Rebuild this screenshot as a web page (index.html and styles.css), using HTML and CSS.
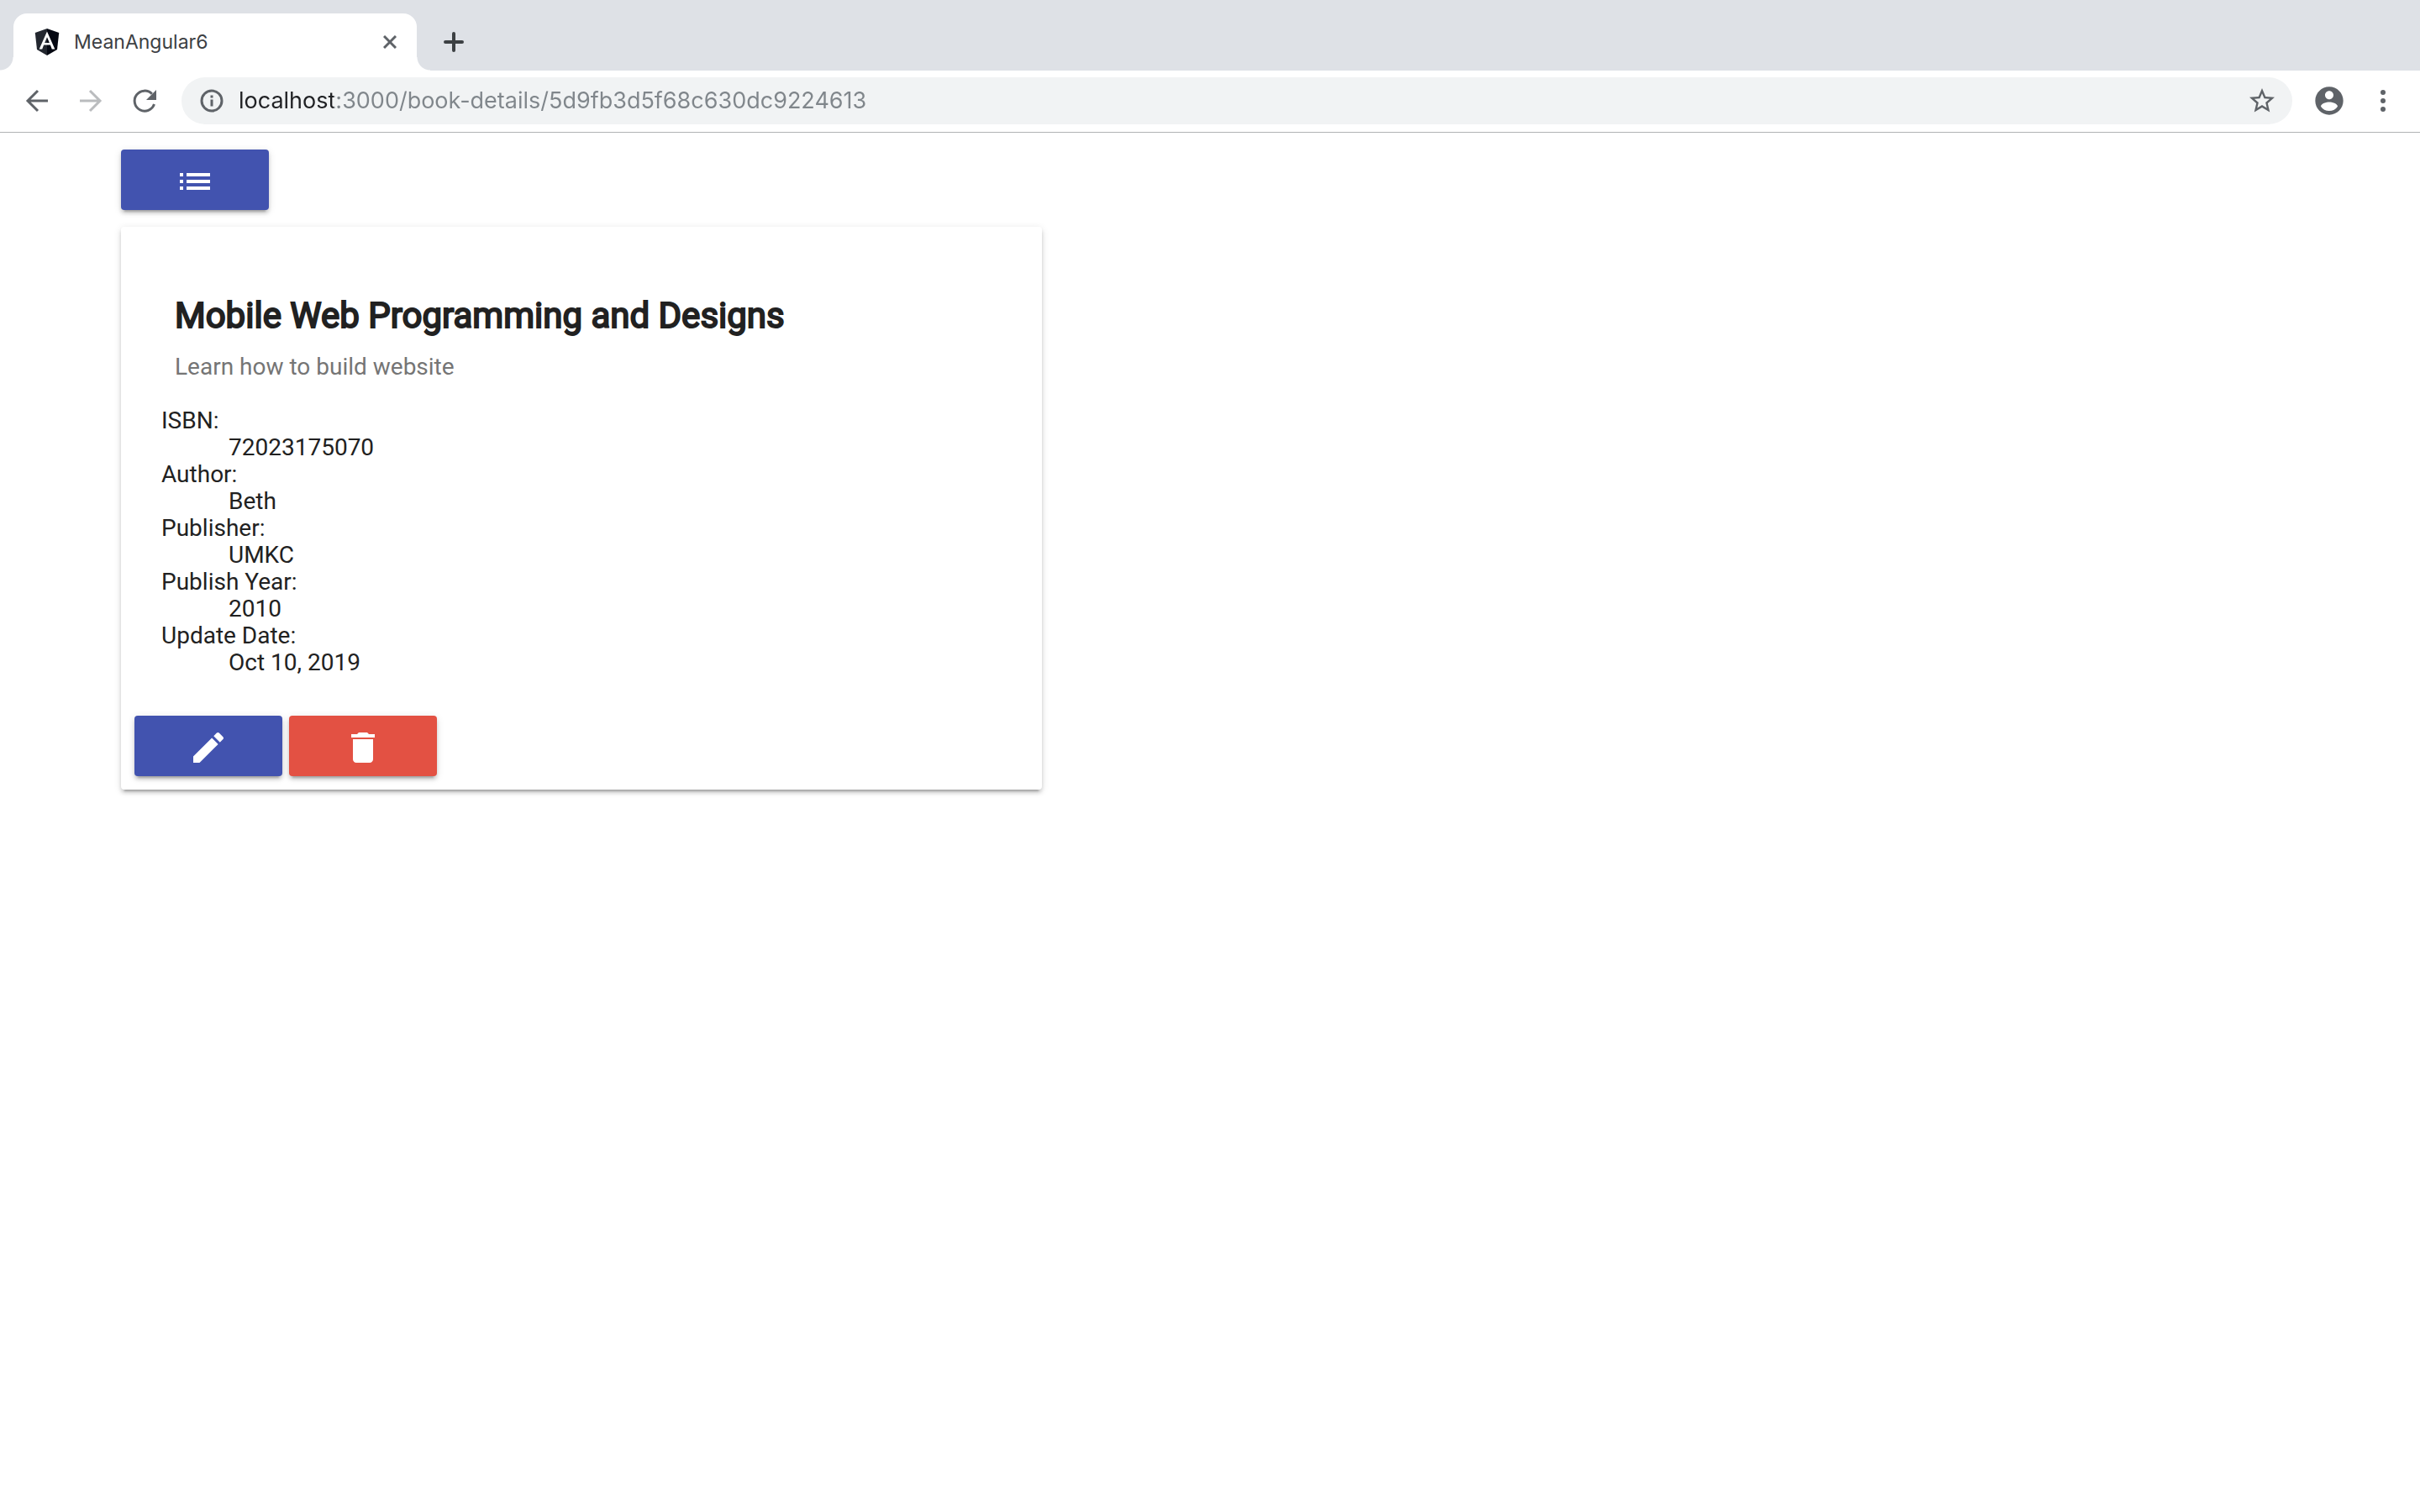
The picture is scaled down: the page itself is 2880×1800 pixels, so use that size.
FILE: index.html
```html
<!DOCTYPE html>
<html lang="en">
<head>
<meta charset="utf-8">
<meta name="viewport" content="width=device-width, initial-scale=1">
<title>MeanAngular6</title>
<link rel="stylesheet" href="styles.css">
</head>
<body>
<header class="browser">
  <div class="tab-strip">
    <div class="tab">
      <svg class="favicon" viewBox="0 0 32 36" aria-hidden="true">
        <path fill="#23272f" d="M16 0 0 5.500 2.500 28 16 36z"/>
        <path fill="#050812" d="M16 0 32 5.500 29.500 28 16 36z"/>
        <path fill="#fff" fill-rule="evenodd" d="M16 4 5.500 27.500h4L11.600 22h8.800l2.100 5.500h4zM16 11.500l3.200 7.500h-6.400z"/>
      </svg>
      <span class="tab-title">MeanAngular6</span>
      <button class="tab-close" type="button" aria-label="Close tab">
        <svg viewBox="0 0 16 16"><path d="M1 1l14 14M15 1l-14 14"/></svg>
      </button>
    </div>
    <button class="new-tab" type="button" aria-label="New tab">
      <svg viewBox="0 0 24 24"><path d="M12 2v20M2 12h20"/></svg>
    </button>
  </div>
  <div class="toolbar">
    <nav class="nav-buttons" aria-label="History">
      <button class="tool" type="button" aria-label="Back">
        <svg viewBox="0 0 32 32"><path class="line" d="M29 16H5M17 4 5 16 17 28"/></svg>
      </button>
      <button class="tool tool-off" type="button" aria-label="Forward" disabled>
        <svg viewBox="0 0 32 32"><path class="line" d="M3 16h24M15 4l12 12L15 28"/></svg>
      </button>
      <button class="tool" type="button" aria-label="Reload">
        <svg viewBox="0 0 32 32"><path class="line" d="M27.500 20A12 12 0 1 1 24.800 7.800"/><path d="M30 3v12H18z"/></svg>
      </button>
    </nav>
    <div class="omnibox">
      <svg class="info" viewBox="0 0 28 28" aria-hidden="true"><circle class="line" cx="14" cy="14" r="12"/><path d="M12.500 12.500h3V20.500h-3zM12.500 7.500h3v3h-3z"/></svg>
      <input class="url" type="text" aria-label="Address" value="localhost:3000/book-details/5d9fb3d5f68c630dc9224613">
      <button class="tool" type="button" aria-label="Bookmark this page">
        <svg viewBox="0 0 24 24"><path d="M22 9.240l-7.190-.62L12 2 9.190 8.630 2 9.240l5.460 4.730L5.820 21 12 17.270 18.180 21l-1.630-7.030L22 9.240zM12 15.400l-3.760 2.270 1-4.280-3.320-2.880 4.380-.38L12 6.100l1.710 4.040 4.380.38-3.320 2.880 1 4.280L12 15.400z"/></svg>
      </button>
    </div>
    <div class="browser-actions">
      <button class="tool tool-profile" type="button" aria-label="Profile">
        <svg viewBox="0 0 24 24"><path d="M12 2C6.480 2 2 6.480 2 12s4.480 10 10 10 10-4.480 10-10S17.520 2 12 2zm0 3c1.660 0 3 1.340 3 3s-1.340 3-3 3-3-1.340-3-3 1.340-3 3-3zm0 14.200c-2.500 0-4.710-1.280-6-3.220.03-1.990 4-3.080 6-3.080 1.990 0 5.970 1.090 6 3.080-1.290 1.940-3.500 3.220-6 3.220z"/></svg>
      </button>
      <button class="tool" type="button" aria-label="Menu">
        <svg viewBox="0 0 32 32"><circle cx="16" cy="6" r="3"/><circle cx="16" cy="16" r="3"/><circle cx="16" cy="26" r="3"/></svg>
      </button>
    </div>
  </div>
</header>
<main class="page">
  <a class="action primary" href="/books" aria-label="Book list">
    <svg viewBox="0 0 24 24"><path d="M3 13h2v-2H3v2zm0 4h2v-2H3v2zm0-8h2V7H3v2zm4 4h14v-2H7v2zm0 4h14v-2H7v2zM7 7v2h14V7H7z"/></svg>
  </a>
  <article class="card">
    <header class="card-header">
      <h2 class="card-title">Mobile Web Programming and Designs</h2>
      <p class="card-subtitle">Learn how to build website</p>
    </header>
    <dl class="details">
      <dt>ISBN:</dt>
      <dd>72023175070</dd>
      <dt>Author:</dt>
      <dd>Beth</dd>
      <dt>Publisher:</dt>
      <dd>UMKC</dd>
      <dt>Publish Year:</dt>
      <dd>2010</dd>
      <dt>Update Date:</dt>
      <dd>Oct 10, 2019</dd>
    </dl>
    <div class="card-actions">
      <a class="action primary" href="/book-edit/5d9fb3d5f68c630dc9224613" aria-label="Edit book">
        <svg viewBox="0 0 24 24"><path d="M3 17.250V21h3.750L17.810 9.940l-3.750-3.750L3 17.250zM20.710 7.040c.39-.39.39-1.020 0-1.410l-2.340-2.340c-.39-.39-1.020-.39-1.410 0l-1.830 1.830 3.750 3.750 1.830-1.830z"/></svg>
      </a>
      <button class="action warn" type="button" aria-label="Delete book">
        <svg viewBox="0 0 24 24"><path d="M6 19c0 1.100.9 2 2 2h8c1.100 0 2-.9 2-2V7H6v12zM19 4h-3.500l-1-1h-5l-1 1H5v2h14V4z"/></svg>
      </button>
    </div>
  </article>
</main>
</body>
</html>
```
FILE: styles.css
```css
* {
  box-sizing: border-box;
}

body {
  margin: 0;
  background: #fff;
  color: #212121;
  font-family: Roboto, sans-serif;
  font-size: 28px;
}

button {
  padding: 0;
  border: 0;
  background: none;
  color: inherit;
  font: inherit;
}

svg {
  display: block;
  fill: currentColor;
}

/* Browser frame */
.browser {
  color: #5f6368;
  font-family: Inter, sans-serif;
  font-size: 27px;
}

.tab-strip {
  display: flex;
  align-items: flex-end;
  gap: 32px;
  height: 84px;
  padding: 0 16px;
  background: #dee1e6;
}

.tab {
  position: relative;
  display: flex;
  align-items: center;
  width: 480px;
  height: 68px;
  padding: 0 24px;
  border-radius: 16px 16px 0 0;
  background: #fff;
}

.tab::before,
.tab::after {
  content: "";
  position: absolute;
  bottom: 0;
  width: 16px;
  height: 16px;
}

.tab::before {
  right: 100%;
  background: radial-gradient(circle at 0 0, #dee1e6 15px, #fff 16px);
}

.tab::after {
  left: 100%;
  background: radial-gradient(circle at 100% 0, #dee1e6 15px, #fff 16px);
}

.favicon {
  width: 32px;
  height: 32px;
}

.tab-title {
  flex: 1;
  margin-left: 16px;
  color: #3c4043;
  font-size: 23px;
}

.tab-close svg {
  width: 16px;
  height: 16px;
  stroke: currentColor;
  stroke-width: 3;
}

.new-tab {
  height: 68px;
  color: #3c4043;
}

.new-tab svg {
  width: 24px;
  height: 24px;
  stroke: currentColor;
  stroke-width: 4;
  stroke-linecap: round;
}

.toolbar {
  display: flex;
  align-items: center;
  gap: 24px;
  height: 74px;
  padding: 0 28px 2px;
  border-bottom: 1px solid #b1b3b5;
}

.nav-buttons {
  display: flex;
  gap: 32px;
  margin-right: 4px;
}

.browser-actions {
  display: flex;
  align-items: center;
  gap: 28px;
}

.tool svg {
  width: 32px;
  height: 32px;
}

.tool-off {
  color: #babcbe;
}

.line {
  fill: none;
  stroke: currentColor;
  stroke-width: 3;
}

.omnibox {
  display: flex;
  flex: 1;
  align-items: center;
  gap: 18px;
  height: 56px;
  padding: 0 20px 0 22px;
  border-radius: 28px;
  background: #f1f3f4;
}

.info {
  width: 28px;
  height: 28px;
}

/* The host name is darker than the rest of the address */
.url {
  flex: 1;
  height: 40px;
  padding: 0;
  border: 0;
  outline: 0;
  background: linear-gradient(to right, #202124 113px, #80868b 113px);
  -webkit-background-clip: text;
  background-clip: text;
  font: inherit;
  -webkit-text-fill-color: transparent;
}

.omnibox .tool svg {
  width: 36px;
  height: 36px;
  margin: 0 -2px;
}

.tool-profile svg {
  width: 40px;
  height: 40px;
}

/* Book details */
.page {
  padding: 20px 144px;
}

.action {
  display: flex;
  align-items: center;
  justify-content: center;
  width: 176px;
  height: 72px;
  padding-top: 4px;
  border-radius: 4px;
  color: #fff;
  box-shadow: 0 6px 2px -4px rgba(0, 0, 0, 0.2), 0 4px 4px rgba(0, 0, 0, 0.14), 0 2px 10px rgba(0, 0, 0, 0.12);
}

.action svg {
  width: 48px;
  height: 48px;
}

.primary {
  background: #4253af;
}

.warn {
  background: #e35143;
}

.card {
  max-width: 1096px;
  margin-top: 20px;
  padding: 48px 48px 16px;
  border-radius: 4px;
  box-shadow: 0 6px 2px -4px rgba(0, 0, 0, 0.2), 0 4px 4px rgba(0, 0, 0, 0.14), 0 2px 10px rgba(0, 0, 0, 0.12);
}

.card-header {
  padding: 32px 16px;
}

.card-title {
  margin: 0;
  font-size: 42px;
  font-weight: 400;
  line-height: 52px;
  -webkit-text-stroke: 2px currentColor;
}

.card-subtitle {
  margin: 19px 0 0;
  color: #757575;
  line-height: 32px;
}

.details {
  margin: 0;
  line-height: 32px;
}

.details dd {
  margin: 0 0 0 80px;
}

.card-actions {
  display: flex;
  gap: 8px;
  margin: 47px -32px 0;
}
```
